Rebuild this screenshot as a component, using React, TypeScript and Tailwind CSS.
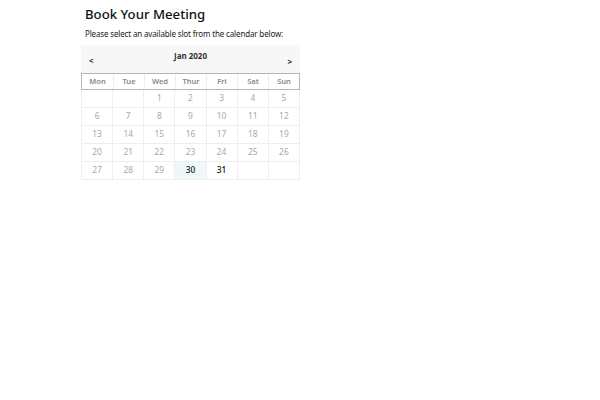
const WEEKDAYS = ['Mon', 'Tue', 'Wed', 'Thur', 'Fri', 'Sat', 'Sun'];

const WEEKS: (number | null)[][] = [
  [null, null, 1, 2, 3, 4, 5],
  [6, 7, 8, 9, 10, 11, 12],
  [13, 14, 15, 16, 17, 18, 19],
  [20, 21, 22, 23, 24, 25, 26],
  [27, 28, 29, 30, 31, null, null],
];

const AVAILABLE = [30, 31];

export default function App() {
  return (
    <div className="h-[400px] w-[600px] bg-white font-['Noto_Sans',sans-serif] text-[#222]">
      <div className="ml-[81px] w-[219px] pt-[6px]">
        <h1 className="pl-[4px] text-[13.2px] font-medium leading-[16px] text-[#111]">
          Book Your Meeting
        </h1>
        <p className="mt-[7px] whitespace-nowrap pl-[4px] text-[8px] leading-[10px] tracking-[-0.15px] text-[#222]">
          Please select an available slot from the calendar below:
        </p>
        <div className="mt-[6px]">
          <div className="flex h-[28px] items-center justify-between bg-[#f7f7f7] px-[8px] text-[8px] font-bold text-[#333]">
            <span className="mt-[3px]">&lt;</span>
            <span className="-mt-[6px]">Jan 2020</span>
            <span className="mt-[5px]">&gt;</span>
          </div>
          <div className="grid h-[17px] grid-cols-7 border border-[#b5b5b5] text-[7.5px] font-semibold text-[#888]">
            {WEEKDAYS.map((d, i) => (
              <div
                key={d}
                className={`flex items-center justify-center ${i > 0 ? 'border-l border-[#eee]' : ''}`}
              >
                {d}
              </div>
            ))}
          </div>
          {WEEKS.map((week, wi) => (
            <div key={wi} className="grid h-[18px] grid-cols-7 border-b border-l border-[#eee]">
              {week.map((day, di) => {
                const avail = day !== null && AVAILABLE.includes(day);
                return (
                  <div
                    key={di}
                    className={`flex items-center justify-center border-r border-[#eee] text-[8.4px] ${
                      avail ? 'font-medium text-[#111]' : 'text-[#a8a8a8]'
                    } ${day === 30 ? 'bg-[#eef7fa]' : ''}`}
                  >
                    {day}
                  </div>
                );
              })}
            </div>
          ))}
        </div>
      </div>
    </div>
  );
}
